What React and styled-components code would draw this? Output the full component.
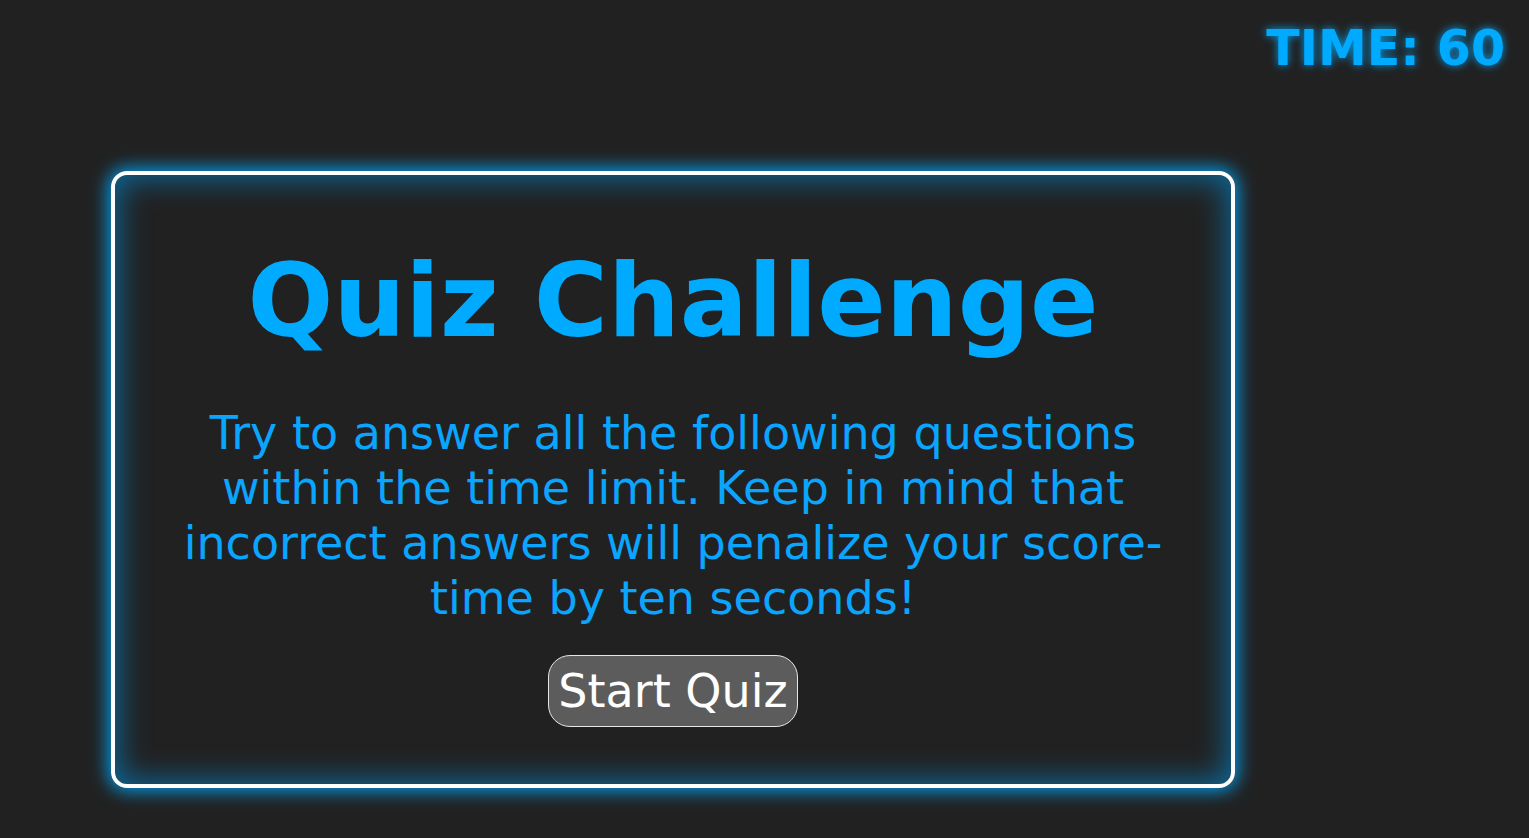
import React from "react";
import styled, { createGlobalStyle } from "styled-components";

const GlobalStyle = createGlobalStyle`
  html, body {
    margin: 0;
    padding: 0;
    background: #212121;
  }
  body {
    font-family: "DejaVu Sans", Verdana, sans-serif;
    min-height: 838px;
  }
`;

const Page = styled.div`
  display: flex;
  flex-direction: column;
  min-height: 838px;
`;

const Header = styled.header`
  display: flex;
  justify-content: flex-end;
  padding: 20px 24px 0 0;
`;

const Timer = styled.div`
  font-size: 49px;
  font-weight: bold;
  color: #00aaff;
  text-shadow: 0 0 8px rgba(0, 170, 255, 0.9);
`;

const Main = styled.main`
  display: flex;
  padding: 94px 0 0 111px;
`;

const Card = styled.section`
  box-sizing: border-box;
  width: 1124px;
  height: 617px;
  border: 4px solid #ffffff;
  border-radius: 16px;
  box-shadow: 0 0 18px 3px rgba(0, 170, 255, 0.9),
    inset 0 0 30px 4px rgba(0, 150, 230, 0.6);
  display: flex;
  flex-direction: column;
  align-items: center;
  text-align: center;
  padding: 68px 60px 0;
`;

const Title = styled.h1`
  margin: 0;
  font-size: 101px;
  font-weight: bold;
  color: #00aaff;
  line-height: 116px;
`;

const Intro = styled.p`
  margin: 47px 0 0;
  max-width: 1000px;
  font-size: 46px;
  line-height: 55px;
  color: #0aa5ff;
`;

const StartButton = styled.button`
  margin-top: 29px;
  font-family: inherit;
  font-size: 46px;
  line-height: 54px;
  color: #ffffff;
  background: #5c5c5c;
  border: 1px solid #e6e6e6;
  border-radius: 22px;
  padding: 8px 9px;
  cursor: pointer;
`;

export default function App() {
  return (
    <Page>
      <GlobalStyle />
      <Header>
        <Timer>TIME: 60</Timer>
      </Header>
      <Main>
        <Card>
          <Title>Quiz Challenge</Title>
          <Intro>
            Try to answer all the following questions within the time limit.
            Keep in mind that incorrect answers will penalize your score-time
            by ten seconds!
          </Intro>
          <StartButton>Start Quiz</StartButton>
        </Card>
      </Main>
    </Page>
  );
}
